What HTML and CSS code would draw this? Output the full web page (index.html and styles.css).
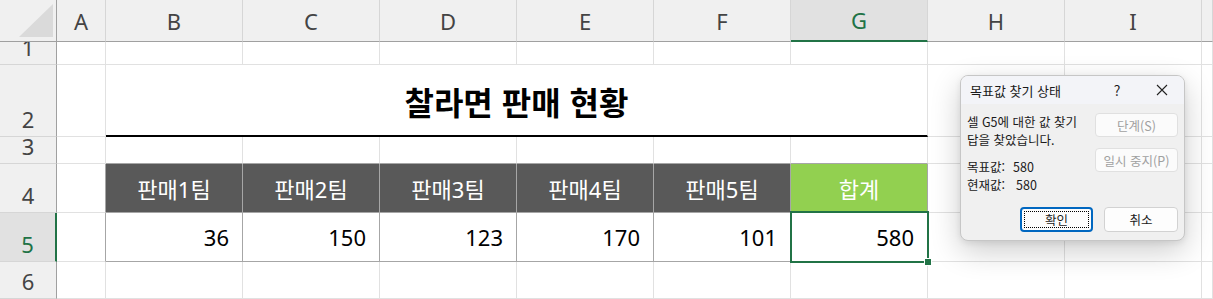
FILE: index.html
```html
<!DOCTYPE html>
<html lang="ko">
<head>
<meta charset="utf-8">
<title>목표값 찾기</title>
<link rel="stylesheet" href="styles.css">
</head>
<body>
<div class="sheet">
  <div class="corner"><svg width="57" height="42" viewBox="0 0 57 42"><polygon points="19,37 53,4 53,37" fill="#dadada"/></svg></div>
  <div class="ch">A</div><div class="ch">B</div><div class="ch">C</div><div class="ch">D</div><div class="ch">E</div><div class="ch">F</div><div class="ch sel">G</div><div class="ch">H</div><div class="ch">I</div><div class="ch"></div>

  <div class="rh">1</div>
  <div class="c"></div><div class="c"></div><div class="c"></div><div class="c"></div><div class="c"></div><div class="c"></div><div class="c"></div><div class="c"></div><div class="c"></div><div class="c"></div>

  <div class="rh">2</div>
  <div class="c"></div>
  <div class="c title">찰라면 판매 현황</div>
  <div class="c"></div><div class="c"></div><div class="c"></div>

  <div class="rh">3</div>
  <div class="c"></div><div class="c tb"></div><div class="c tb"></div><div class="c tb"></div><div class="c tb"></div><div class="c tb"></div><div class="c tb"></div><div class="c"></div><div class="c"></div><div class="c"></div>

  <div class="rh">4</div>
  <div class="c tl"></div>
  <div class="c th">판매1팀</div><div class="c th">판매2팀</div><div class="c th">판매3팀</div><div class="c th">판매4팀</div><div class="c th">판매5팀</div><div class="c th total">합계</div>
  <div class="c"></div><div class="c"></div><div class="c"></div>

  <div class="rh sel">5</div>
  <div class="c tl"></div>
  <div class="c td">36</div><div class="c td">150</div><div class="c td">123</div><div class="c td">170</div><div class="c td">101</div><div class="c td active">580</div>
  <div class="c"></div><div class="c"></div><div class="c"></div>

  <div class="rh">6</div>
  <div class="c"></div><div class="c"></div><div class="c"></div><div class="c"></div><div class="c"></div><div class="c"></div><div class="c"></div><div class="c"></div><div class="c"></div><div class="c"></div>
</div>

<div class="dialog">
  <div class="dlg-title">
    <span class="dlg-title-text">목표값 찾기 상태</span>
    <span class="dlg-icon">?</span>
    <span class="dlg-icon"><svg width="12" height="12" viewBox="0 0 12 12"><path d="M1 1 L11 11 M11 1 L1 11" stroke="#222" stroke-width="1.1" fill="none"/></svg></span>
  </div>
  <div class="dlg-body">
    <div class="dlg-text">
      <div class="line">셀 G5에 대한 값 찾기</div>
      <div class="line">답을 찾았습니다.</div>
      <div class="line gap">목표값:<span class="v1">580</span></div>
      <div class="line">현재값:<span class="v2">580</span></div>
    </div>
    <div class="dlg-side">
      <div class="btn disabled">단계(S)</div>
      <div class="btn disabled">일시 중지(P)</div>
    </div>
  </div>
  <div class="dlg-foot">
    <div class="btn ok"><span class="focus">확인</span></div>
    <div class="btn cancel">취소</div>
  </div>
</div>
</body>
</html>
```

FILE: styles.css
```css
html, body {
  margin: 0;
  padding: 0;
  background: #ffffff;
  overflow: hidden;
}

body {
  width: 1213px;
  height: 299px;
  position: relative;
  font-family: "Noto Sans", "Noto Sans CJK KR", sans-serif;
}

.sheet {
  display: grid;
  grid-template-columns: 57px 49px repeat(8, 137px) 1fr;
  grid-template-rows: 42px 23px 72px 27px 49px 49px 1fr;
  width: 1213px;
  height: 299px;
}

.sheet > div {
  box-sizing: border-box;
  overflow: hidden;
}

.corner {
  background: #f0f0f0;
  border-right: 1px solid #a0a0a0;
  border-bottom: 1px solid #a0a0a0;
}

.corner svg {
  display: block;
}

.ch {
  background: #f0f0f0;
  border-right: 1px solid #d6d6d6;
  border-bottom: 1px solid #a0a0a0;
  display: flex;
  align-items: center;
  justify-content: center;
  font-size: 22px;
  color: #444444;
}

.ch.sel {
  background: #e1e1e1;
  color: #217346;
  border-bottom: 2px solid #217346;
}

.rh {
  background: #f0f0f0;
  border-right: 1px solid #a0a0a0;
  border-bottom: 1px solid #d6d6d6;
  display: flex;
  align-items: flex-end;
  justify-content: center;
  font-size: 22px;
  line-height: 22px;
  padding-bottom: 6px;
  color: #444444;
}

.rh.sel {
  background: #e1e1e1;
  color: #217346;
  border-right: 2px solid #217346;
}

.c {
  border-right: 1px solid #e1e1e1;
  border-bottom: 1px solid #e1e1e1;
}

.title {
  grid-column: span 6;
  border-bottom: 2px solid #000000;
  display: flex;
  align-items: center;
  justify-content: center;
  font-family: "Noto Sans CJK KR", sans-serif;
  font-weight: 700;
  font-size: 32px;
  color: #000000;
  padding-top: 1px;
}

.tb {
  border-bottom-color: #a6a6a6;
}

.tl {
  border-right-color: #a6a6a6;
}

.th {
  background: #595959;
  color: #ffffff;
  border-right-color: #a6a6a6;
  border-bottom-color: #a6a6a6;
  display: flex;
  align-items: center;
  justify-content: center;
  font-size: 22px;
}

.th.total {
  background: #92d050;
}

.td {
  border-right-color: #a6a6a6;
  border-bottom-color: #a6a6a6;
  display: flex;
  align-items: center;
  justify-content: flex-end;
  padding-right: 13px;
  font-size: 22px;
  color: #000000;
}

.sheet > .active {
  position: relative;
  overflow: visible;
}

.active::before {
  content: "";
  position: absolute;
  left: -1px;
  top: -2px;
  right: -2px;
  bottom: -2px;
  border: 2px solid #217346;
}

.active::after {
  content: "";
  position: absolute;
  right: -4px;
  bottom: -4px;
  width: 6px;
  height: 6px;
  background: #217346;
  outline: 1px solid #ffffff;
}

/* dialog */
.dialog {
  position: absolute;
  left: 960px;
  top: 75px;
  width: 225px;
  height: 166px;
  box-sizing: border-box;
  border: 1px solid #c6c6c6;
  border-radius: 8px;
  background: #f0f0f0;
  box-shadow: 0 10px 30px rgba(0, 0, 0, 0.2), 0 2px 6px rgba(0, 0, 0, 0.08);
  overflow: hidden;
  display: flex;
  flex-direction: column;
  font-family: "Noto Sans CJK KR", sans-serif;
  color: #1a1a1a;
}

.dlg-title {
  height: 28px;
  background: #f3f4f8;
  display: flex;
  align-items: center;
  padding-left: 9px;
  padding-right: 7px;
  gap: 15px;
  font-size: 13px;
}

.dlg-title-text {
  flex: 1;
}

.dlg-icon {
  width: 30px;
  display: flex;
  justify-content: center;
  align-items: center;
  font-size: 14px;
}

.dlg-body {
  display: flex;
  padding: 9px 6px 0 6px;
}

.dlg-text {
  flex: 1;
  font-size: 12.5px;
}

.line {
  line-height: 18px;
  white-space: nowrap;
}

.line.gap {
  margin-top: 9px;
}

.v1 {
  margin-left: 8px;
}

.v2 {
  margin-left: 11px;
}

.dlg-side {
  width: 83px;
  display: flex;
  flex-direction: column;
  gap: 11px;
}

.btn {
  box-sizing: border-box;
  height: 24px;
  border: 1px solid #d2d2d2;
  border-radius: 4px;
  background: #fdfdfd;
  display: flex;
  align-items: center;
  justify-content: center;
  font-size: 12.5px;
  color: #1a1a1a;
}

.btn.disabled {
  color: #a0a0a0;
  border-color: #e0e0e0;
  background: #fbfbfb;
}

.dlg-foot {
  margin-top: auto;
  display: flex;
  justify-content: flex-end;
  gap: 11px;
  padding: 0 6px 8px 0;
}

.btn.ok,
.btn.cancel {
  height: 25px;
  width: 74px;
}

.btn.ok {
  width: 73px;
  border: 2px solid #0067c0;
  padding: 2px;
}

.focus {
  flex: 1;
  align-self: stretch;
  display: flex;
  align-items: center;
  justify-content: center;
  border: 1px dotted #000000;
}
```
